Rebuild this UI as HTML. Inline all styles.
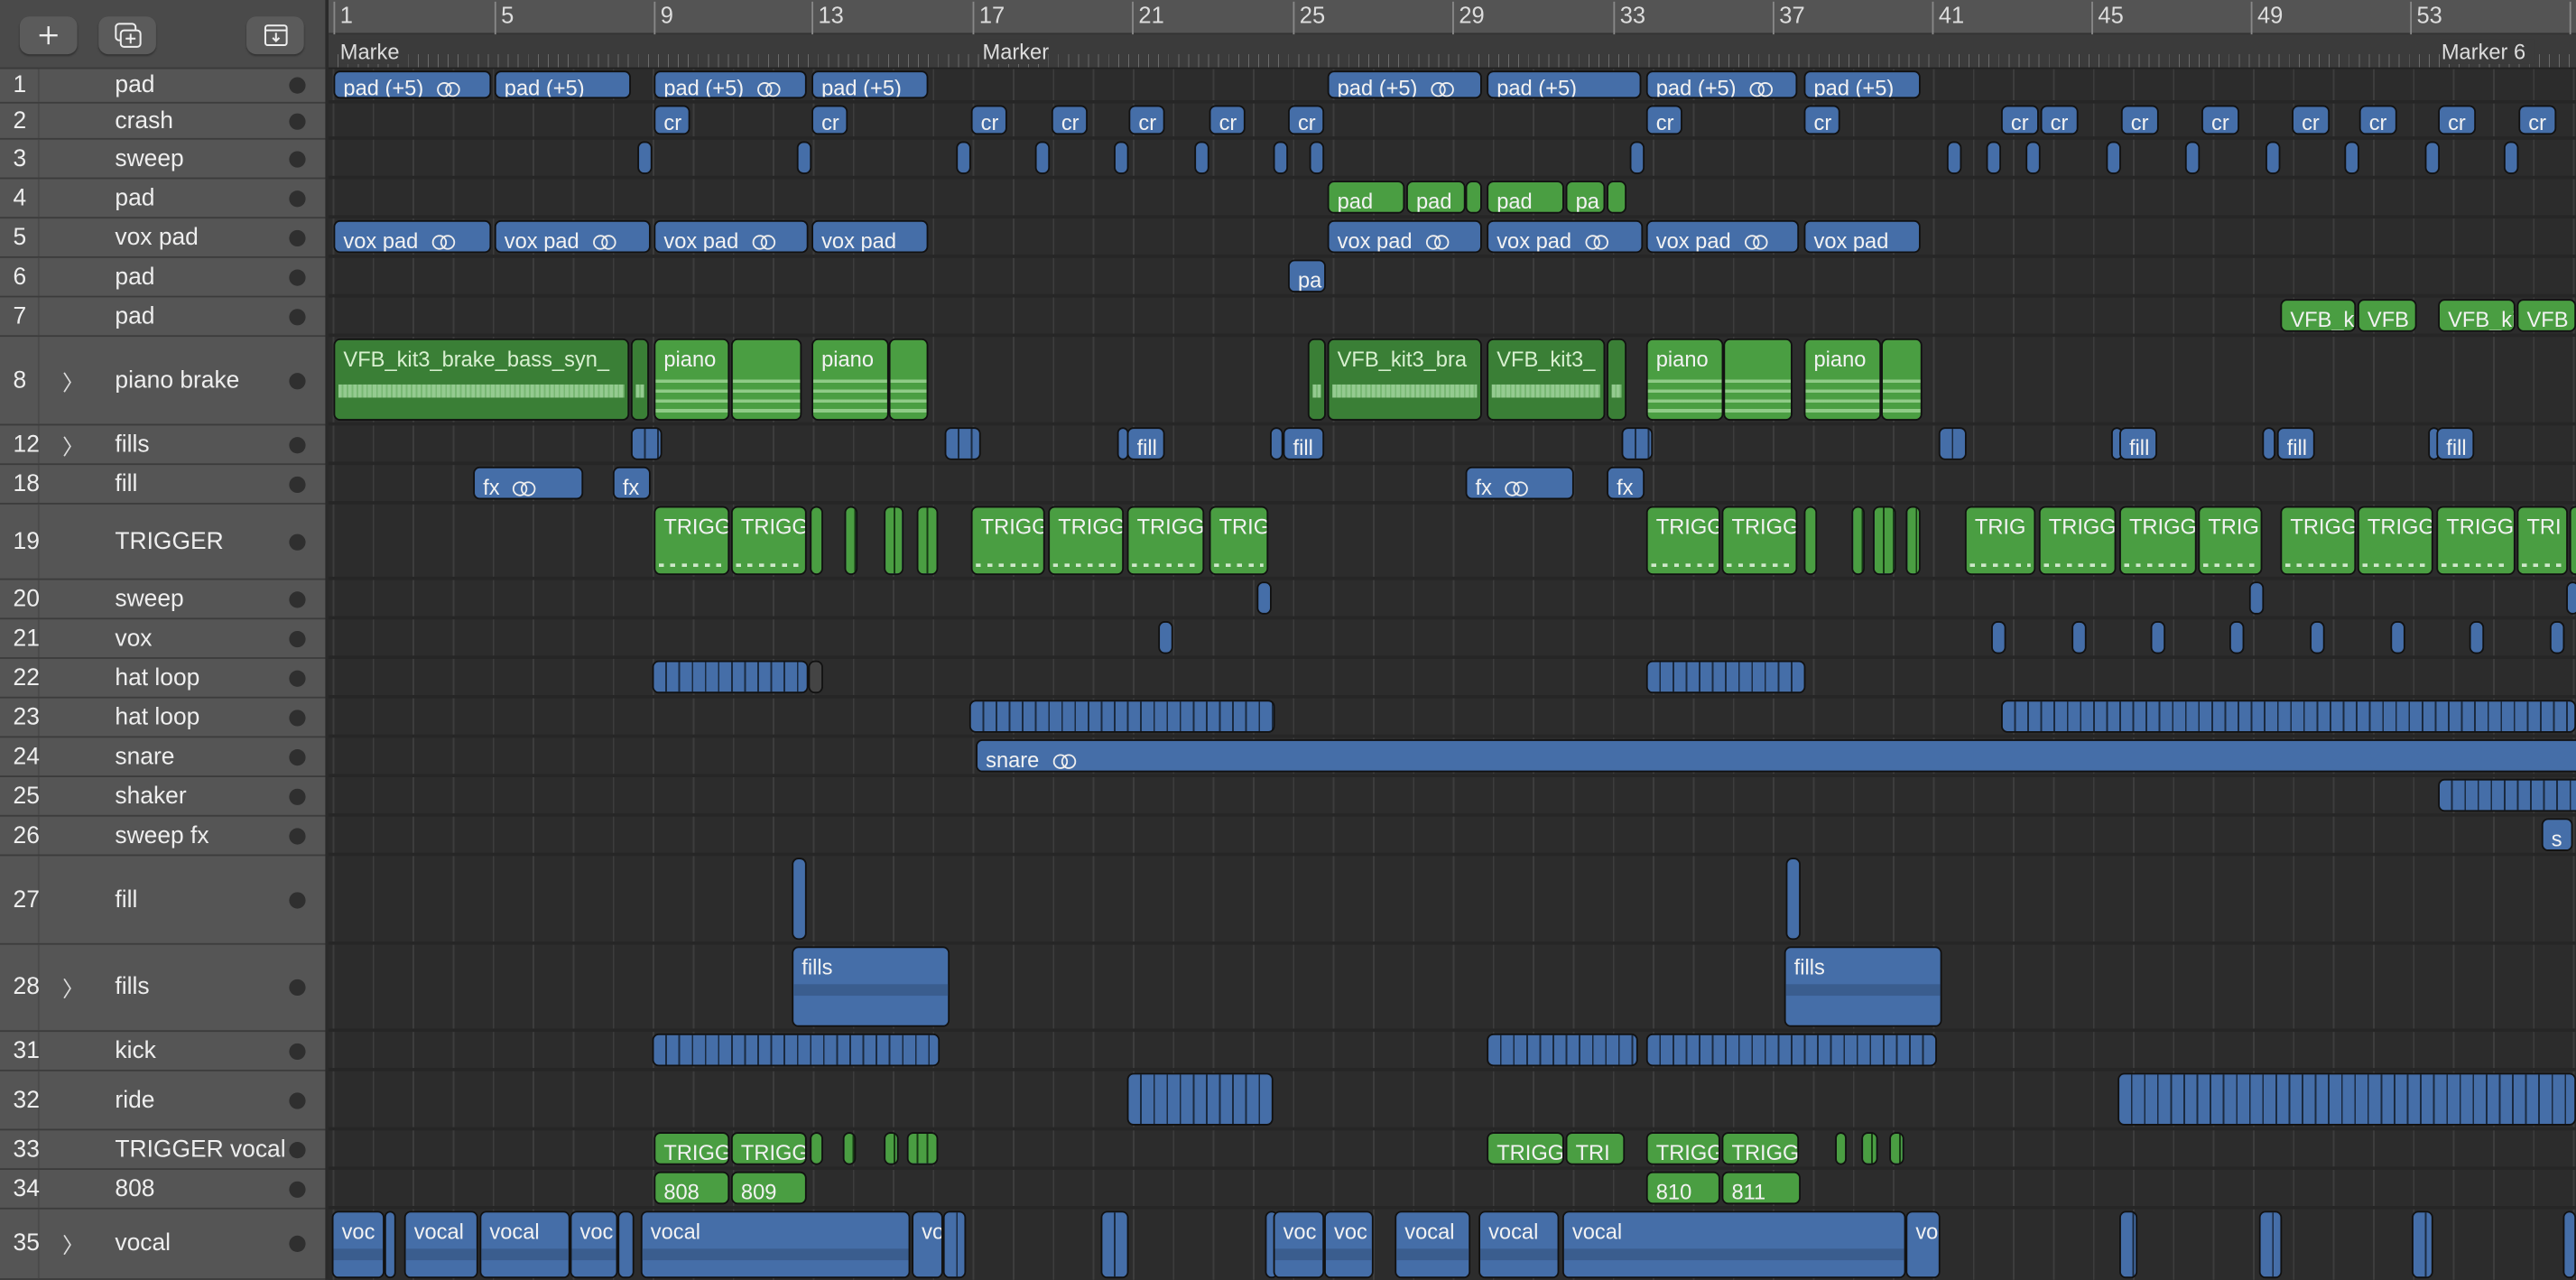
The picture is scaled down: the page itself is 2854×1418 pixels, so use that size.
<!DOCTYPE html>
<html><head><meta charset="utf-8"><style>
*{margin:0;padding:0;box-sizing:border-box}
html,body{width:2854px;height:1418px;overflow:hidden;background:#2b2b2b}
#w{position:absolute;left:0;top:0;width:1568px;height:779px;transform:scale(1.8202);transform-origin:0 0;font-family:"Liberation Sans",sans-serif;color:#eee;background:#2c2c2c;overflow:hidden}
#hdr{position:absolute;left:0;top:0;width:200px;height:779px;background:#555}
#tb{position:absolute;left:0;top:0;width:200px;height:42px;background:#4a4a4a;border-bottom:1px solid #3a3a3a}
.btn{position:absolute;top:10px;width:35px;height:23px;border-radius:6px;background:#5b5b5b;box-shadow:0 1px 1px #333}
.th{position:absolute;left:0;width:199px;border-bottom:1px solid #3c3c3c;font-size:14.5px}
.th .n{position:absolute;left:8px;top:50%;transform:translateY(-50%)}
.th .c{position:absolute;left:38px;top:50%;transform:translateY(-50%);font-size:13px;color:#ddd}
.th .nm{position:absolute;left:70px;top:50%;transform:translateY(-50%);white-space:nowrap}
.th .d{position:absolute;left:176px;top:50%;margin-top:-5px;width:10px;height:10px;border-radius:50%;background:#2f2f2f}
.th .sep{position:absolute;left:23px;top:0;bottom:0;width:1px;background:#4a4a4a}
#ru{position:absolute;left:200px;top:0;width:1368px;height:21px;background:#545454;border-bottom:1px solid #333}
#mk{position:absolute;left:200px;top:21px;width:1368px;height:21px;background:#3b3b3b;border-bottom:1px solid #222;
background-image:repeating-linear-gradient(90deg,transparent 0,transparent 5.59px,#6a6a6a 5.59px,#6a6a6a 6.09px);background-size:100% 8px;background-repeat:no-repeat;background-position:0 12px}
.bn{position:absolute;top:1px;font-size:14px;color:#ddd;padding-left:3px;border-left:1px solid #888;height:20px}
#ar{position:absolute;left:200px;top:42px;width:1368px;height:737px;background-color:#2c2c2c;
background-image:repeating-linear-gradient(90deg,transparent 0,transparent 2.5px,#3d3d3d 2.5px,#3d3d3d 3.5px,transparent 3.5px,transparent 24.35px)}
.row{position:absolute;left:200px;width:1368px;border-bottom:2px solid #262626}
.r{position:absolute;top:1px;bottom:1px;border:1px solid #111;border-radius:4px;background:#456ea8;font-size:13px;line-height:15px;color:#f2f2f2;padding:2px 0 0 5px;overflow:hidden;white-space:nowrap}
.g{background:#4a9e42}
.ga{background:#3a7f36;color:#d8f0d0}
.s{background-image:repeating-linear-gradient(90deg,#456ea8 0,#456ea8 7px,#1a2a40 7px,#1a2a40 8px)}
.sg{background-image:repeating-linear-gradient(90deg,#4a9e42 0,#4a9e42 5px,#173a14 5px,#173a14 6px)}
.lp{display:inline-block;width:9px;height:9px;border:1.3px solid #eee;border-radius:50%;vertical-align:-1px;margin-left:8px}
.lp+.lp{margin-left:-4px}
.wav{position:absolute;left:2px;right:2px;top:27px;height:8px;background:repeating-linear-gradient(90deg,#9ed39a 0,#9ed39a 2px,#7fbf7a 2px,#7fbf7a 3px);opacity:.9}
.midi{position:absolute;left:0;right:0;top:20px;height:26px;background:repeating-linear-gradient(0deg,transparent 0,transparent 2px,#c8f0c0 2px,#c8f0c0 4px,transparent 4px,transparent 6px);opacity:.55}
.dots{position:absolute;left:2px;right:2px;bottom:4px;height:2px;background:repeating-linear-gradient(90deg,#cfe9cb 0,#cfe9cb 3px,transparent 3px,transparent 7px)}
.lane{position:absolute;left:0;right:0;top:22px;height:7px;background:#3a5d8e}
.t{padding-top:4px}
</style></head><body><div id="w">
<div id="ar"></div>
<div id="hdr">
<div id="tb">
<div class="btn" style="left:12px"><svg width="35" height="23"><path d="M17.5 6v11M12 11.5h11" stroke="#eee" stroke-width="1.3"/></svg></div>
<div class="btn" style="left:60px"><svg width="35" height="23"><rect x="10.5" y="4.5" width="12" height="10" rx="2" fill="none" stroke="#eee" stroke-width="1.1"/><rect x="13.5" y="8.5" width="12" height="10" rx="2" fill="#5b5b5b" stroke="#eee" stroke-width="1.1"/><path d="M19.5 10.5v6M16.5 13.5h6" stroke="#eee" stroke-width="1.1"/></svg></div>
<div class="btn" style="left:150px"><svg width="35" height="23"><rect x="11.5" y="5.5" width="13" height="12" rx="1.5" fill="none" stroke="#eee" stroke-width="1.1"/><path d="M11.5 8.5h13M18 10v5M16 13l2 2 2-2" stroke="#eee" stroke-width="1.1" fill="none"/></svg></div>
</div>
<div class="th" style="top:42px;height:21px"><span class="sep"></span><span class="n">1</span><span class="nm">pad</span><span class="d"></span></div>
<div class="th" style="top:63px;height:22px"><span class="sep"></span><span class="n">2</span><span class="nm">crash</span><span class="d"></span></div>
<div class="th" style="top:85px;height:24px"><span class="sep"></span><span class="n">3</span><span class="nm">sweep</span><span class="d"></span></div>
<div class="th" style="top:109px;height:24px"><span class="sep"></span><span class="n">4</span><span class="nm">pad</span><span class="d"></span></div>
<div class="th" style="top:133px;height:24px"><span class="sep"></span><span class="n">5</span><span class="nm">vox pad</span><span class="d"></span></div>
<div class="th" style="top:157px;height:24px"><span class="sep"></span><span class="n">6</span><span class="nm">pad</span><span class="d"></span></div>
<div class="th" style="top:181px;height:24px"><span class="sep"></span><span class="n">7</span><span class="nm">pad</span><span class="d"></span></div>
<div class="th" style="top:205px;height:54px"><span class="sep"></span><span class="n">8</span><span class="c">〉</span><span class="nm">piano brake</span><span class="d"></span></div>
<div class="th" style="top:259px;height:24px"><span class="sep"></span><span class="n">12</span><span class="c">〉</span><span class="nm">fills</span><span class="d"></span></div>
<div class="th" style="top:283px;height:24px"><span class="sep"></span><span class="n">18</span><span class="nm">fill</span><span class="d"></span></div>
<div class="th" style="top:307px;height:46px"><span class="sep"></span><span class="n">19</span><span class="nm">TRIGGER</span><span class="d"></span></div>
<div class="th" style="top:353px;height:24px"><span class="sep"></span><span class="n">20</span><span class="nm">sweep</span><span class="d"></span></div>
<div class="th" style="top:377px;height:24px"><span class="sep"></span><span class="n">21</span><span class="nm">vox</span><span class="d"></span></div>
<div class="th" style="top:401px;height:24px"><span class="sep"></span><span class="n">22</span><span class="nm">hat loop</span><span class="d"></span></div>
<div class="th" style="top:425px;height:24px"><span class="sep"></span><span class="n">23</span><span class="nm">hat loop</span><span class="d"></span></div>
<div class="th" style="top:449px;height:24px"><span class="sep"></span><span class="n">24</span><span class="nm">snare</span><span class="d"></span></div>
<div class="th" style="top:473px;height:24px"><span class="sep"></span><span class="n">25</span><span class="nm">shaker</span><span class="d"></span></div>
<div class="th" style="top:497px;height:24px"><span class="sep"></span><span class="n">26</span><span class="nm">sweep fx</span><span class="d"></span></div>
<div class="th" style="top:521px;height:54px"><span class="sep"></span><span class="n">27</span><span class="nm">fill</span><span class="d"></span></div>
<div class="th" style="top:575px;height:53px"><span class="sep"></span><span class="n">28</span><span class="c">〉</span><span class="nm">fills</span><span class="d"></span></div>
<div class="th" style="top:628px;height:24px"><span class="sep"></span><span class="n">31</span><span class="nm">kick</span><span class="d"></span></div>
<div class="th" style="top:652px;height:36px"><span class="sep"></span><span class="n">32</span><span class="nm">ride</span><span class="d"></span></div>
<div class="th" style="top:688px;height:24px"><span class="sep"></span><span class="n">33</span><span class="nm">TRIGGER vocal</span><span class="d"></span></div>
<div class="th" style="top:712px;height:24px"><span class="sep"></span><span class="n">34</span><span class="nm">808</span><span class="d"></span></div>
<div class="th" style="top:736px;height:43px"><span class="sep"></span><span class="n">35</span><span class="c">〉</span><span class="nm">vocal</span><span class="d"></span></div>
<div style="position:absolute;left:198px;top:0;width:2px;height:779px;background:#2a2a2a"></div>
</div>
<div id="ru">
<span class="bn" style="left:3px">1</span><span class="bn" style="left:101px">5</span><span class="bn" style="left:198px">9</span><span class="bn" style="left:294px">13</span><span class="bn" style="left:392px">17</span><span class="bn" style="left:489px">21</span><span class="bn" style="left:587px">25</span><span class="bn" style="left:684px">29</span><span class="bn" style="left:782px">33</span><span class="bn" style="left:879px">37</span><span class="bn" style="left:976px">41</span><span class="bn" style="left:1073px">45</span><span class="bn" style="left:1170px">49</span><span class="bn" style="left:1267px">53</span><span class="bn" style="left:1364px">5</span>
</div>
<div id="mk">
<span style="position:absolute;left:7px;top:3px;font-size:13px;color:#ddd;background:#3b3b3b">Marke</span>
<span style="position:absolute;left:398px;top:3px;font-size:13px;color:#ddd;background:#3b3b3b">Marker</span>
<span style="position:absolute;left:1286px;top:3px;font-size:13px;color:#ddd;background:#3b3b3b;padding-right:6px">Marker 6</span>
</div>

<div class="row" style="top:42px;height:21px">
<div class="r" style="left:3px;width:96px">pad (+5)<span class="lp"></span><span class="lp"></span></div>
<div class="r" style="left:101px;width:83px">pad (+5)</div>
<div class="r" style="left:198px;width:93px">pad (+5)<span class="lp"></span><span class="lp"></span></div>
<div class="r" style="left:294px;width:71px">pad (+5)</div>
<div class="r" style="left:608px;width:94px">pad (+5)<span class="lp"></span><span class="lp"></span></div>
<div class="r" style="left:705px;width:94px">pad (+5)</div>
<div class="r" style="left:802px;width:92px">pad (+5)<span class="lp"></span><span class="lp"></span></div>
<div class="r" style="left:898px;width:71px">pad (+5)</div>
</div>
<div class="row" style="top:63px;height:22px">
<div class="r" style="left:198px;width:22px">cr</div><div class="r" style="left:294px;width:22px">cr</div><div class="r" style="left:391px;width:22px">cr</div><div class="r" style="left:440px;width:22px">cr</div><div class="r" style="left:487px;width:22px">cr</div><div class="r" style="left:536px;width:22px">cr</div><div class="r" style="left:584px;width:22px">cr</div><div class="r" style="left:802px;width:22px">cr</div><div class="r" style="left:898px;width:22px">cr</div><div class="r" style="left:1018px;width:23px">cr</div><div class="r" style="left:1042px;width:23px">cr</div><div class="r" style="left:1091px;width:23px">cr</div><div class="r" style="left:1140px;width:23px">cr</div><div class="r" style="left:1195px;width:23px">cr</div><div class="r" style="left:1236px;width:23px">cr</div><div class="r" style="left:1284px;width:23px">cr</div><div class="r" style="left:1333px;width:23px">cr</div>
</div>
<div class="row" style="top:85px;height:24px">
<div class="r" style="left:188px;width:9px"></div><div class="r" style="left:285px;width:9px"></div><div class="r" style="left:382px;width:9px"></div><div class="r" style="left:430px;width:9px"></div><div class="r" style="left:478px;width:9px"></div><div class="r" style="left:527px;width:9px"></div><div class="r" style="left:575px;width:9px"></div><div class="r" style="left:597px;width:9px"></div><div class="r" style="left:792px;width:9px"></div><div class="r" style="left:985px;width:9px"></div><div class="r" style="left:1009px;width:9px"></div><div class="r" style="left:1033px;width:9px"></div><div class="r" style="left:1082px;width:9px"></div><div class="r" style="left:1130px;width:9px"></div><div class="r" style="left:1179px;width:9px"></div><div class="r" style="left:1227px;width:9px"></div><div class="r" style="left:1276px;width:9px"></div><div class="r" style="left:1324px;width:9px"></div>
</div>
<div class="row" style="top:109px;height:24px">
<div class="r g t" style="left:608px;width:47px">pad</div><div class="r g t" style="left:656px;width:36px">pad</div><div class="r g" style="left:692px;width:10px"></div><div class="r g t" style="left:705px;width:47px">pad</div><div class="r g t" style="left:753px;width:24px">pa</div><div class="r g" style="left:778px;width:12px"></div>
</div>
<div class="row" style="top:133px;height:24px">
<div class="r t" style="left:3px;width:96px">vox pad<span class="lp"></span><span class="lp"></span></div>
<div class="r t" style="left:101px;width:95px">vox pad<span class="lp"></span><span class="lp"></span></div>
<div class="r t" style="left:198px;width:94px">vox pad<span class="lp"></span><span class="lp"></span></div>
<div class="r t" style="left:294px;width:71px">vox pad</div>
<div class="r t" style="left:608px;width:94px">vox pad<span class="lp"></span><span class="lp"></span></div>
<div class="r t" style="left:705px;width:95px">vox pad<span class="lp"></span><span class="lp"></span></div>
<div class="r t" style="left:802px;width:93px">vox pad<span class="lp"></span><span class="lp"></span></div>
<div class="r t" style="left:898px;width:71px">vox pad</div>
</div>
<div class="row" style="top:157px;height:24px"><div class="r t" style="left:584px;width:23px">pa</div></div>
<div class="row" style="top:181px;height:24px">
<div class="r g t" style="left:1188px;width:46px">VFB_ki</div><div class="r g t" style="left:1235px;width:36px">VFB</div><div class="r g t" style="left:1284px;width:47px">VFB_ki</div><div class="r g t" style="left:1332px;width:36px">VFB</div>
</div>
<div class="row" style="top:205px;height:54px">
<div class="r ga t" style="left:3px;width:180px">VFB_kit3_brake_bass_syn_<div class="wav"></div></div>
<div class="r ga" style="left:184px;width:11px"><div class="wav"></div></div>
<div class="r g t" style="left:198px;width:46px">piano<div class="midi"></div></div>
<div class="r g" style="left:245px;width:43px"><div class="midi"></div></div>
<div class="r g t" style="left:294px;width:47px">piano<div class="midi"></div></div>
<div class="r g" style="left:341px;width:24px"><div class="midi"></div></div>
<div class="r ga" style="left:596px;width:11px"><div class="wav"></div></div>
<div class="r ga t" style="left:608px;width:94px">VFB_kit3_bra<div class="wav"></div></div>
<div class="r ga t" style="left:705px;width:72px">VFB_kit3_<div class="wav"></div></div>
<div class="r ga" style="left:778px;width:12px"><div class="wav"></div></div>
<div class="r g t" style="left:802px;width:47px">piano<div class="midi"></div></div>
<div class="r g" style="left:849px;width:42px"><div class="midi"></div></div>
<div class="r g t" style="left:898px;width:47px">piano<div class="midi"></div></div>
<div class="r g" style="left:945px;width:25px"><div class="midi"></div></div>
</div>
<div class="row" style="top:259px;height:24px">
<div class="r s" style="left:184px;width:19px"></div><div class="r s" style="left:375px;width:22px"></div><div class="r s" style="left:480px;width:7px"></div><div class="r t" style="left:486px;width:23px">fill</div><div class="r s" style="left:573px;width:8px"></div><div class="r t" style="left:581px;width:25px">fill</div><div class="r s" style="left:787px;width:19px"></div><div class="r s" style="left:980px;width:17px"></div><div class="r s" style="left:1085px;width:6px"></div><div class="r t" style="left:1090px;width:23px">fill</div><div class="r s" style="left:1177px;width:8px"></div><div class="r t" style="left:1186px;width:23px">fill</div><div class="r s" style="left:1278px;width:6px"></div><div class="r t" style="left:1283px;width:23px">fill</div>
</div>
<div class="row" style="top:283px;height:24px">
<div class="r t" style="left:88px;width:67px">fx<span class="lp"></span><span class="lp"></span></div><div class="r t" style="left:173px;width:23px">fx</div><div class="r t" style="left:692px;width:66px">fx<span class="lp"></span><span class="lp"></span></div><div class="r t" style="left:778px;width:23px">fx</div>
</div>
<div class="row" style="top:307px;height:46px">
<div class="r g t" style="left:198px;width:46px">TRIGG<div class="dots"></div></div><div class="r g t" style="left:245px;width:46px">TRIGG<div class="dots"></div></div>
<div class="r g" style="left:293px;width:8px"></div><div class="r sg" style="left:314px;width:8px"></div><div class="r sg" style="left:338px;width:12px"></div><div class="r sg" style="left:358px;width:13px"></div>
<div class="r g t" style="left:391px;width:45px">TRIGG<div class="dots"></div></div><div class="r g t" style="left:438px;width:46px">TRIGG<div class="dots"></div></div><div class="r g t" style="left:486px;width:47px">TRIGG<div class="dots"></div></div><div class="r g t" style="left:536px;width:36px">TRIG<div class="dots"></div></div>
<div class="r g t" style="left:802px;width:45px">TRIGG<div class="dots"></div></div><div class="r g t" style="left:848px;width:46px">TRIGG<div class="dots"></div></div>
<div class="r g" style="left:898px;width:8px"></div><div class="r sg" style="left:927px;width:8px"></div><div class="r sg" style="left:940px;width:14px"></div><div class="r sg" style="left:960px;width:9px"></div>
<div class="r g t" style="left:996px;width:43px">TRIG<div class="dots"></div></div><div class="r g t" style="left:1041px;width:47px">TRIGG<div class="dots"></div></div><div class="r g t" style="left:1090px;width:47px">TRIGG<div class="dots"></div></div><div class="r g t" style="left:1138px;width:39px">TRIG<div class="dots"></div></div><div class="r g t" style="left:1188px;width:46px">TRIGG<div class="dots"></div></div><div class="r g t" style="left:1235px;width:46px">TRIGG<div class="dots"></div></div><div class="r g t" style="left:1283px;width:48px">TRIGG<div class="dots"></div></div><div class="r g t" style="left:1332px;width:31px">TRI<div class="dots"></div></div><div class="r g" style="left:1364px;width:6px"></div>
</div>
<div class="row" style="top:353px;height:24px"><div class="r" style="left:565px;width:9px"></div><div class="r" style="left:1169px;width:9px"></div><div class="r" style="left:1362px;width:8px"></div></div>
<div class="row" style="top:377px;height:24px">
<div class="r" style="left:505px;width:9px"></div><div class="r" style="left:1012px;width:9px"></div><div class="r" style="left:1061px;width:9px"></div><div class="r" style="left:1109px;width:9px"></div><div class="r" style="left:1157px;width:9px"></div><div class="r" style="left:1206px;width:9px"></div><div class="r" style="left:1255px;width:9px"></div><div class="r" style="left:1303px;width:9px"></div><div class="r" style="left:1352px;width:9px"></div>
</div>
<div class="row" style="top:401px;height:24px"><div class="r s" style="left:197px;width:95px"></div><div class="r" style="left:292px;width:9px;background:#444"></div><div class="r s" style="left:802px;width:97px"></div></div>
<div class="row" style="top:425px;height:24px"><div class="r s" style="left:390px;width:186px"></div><div class="r s" style="left:1018px;width:350px"></div></div>
<div class="row" style="top:449px;height:24px"><div class="r t" style="left:394px;width:980px">snare<span class="lp"></span><span class="lp"></span></div></div>
<div class="row" style="top:473px;height:24px"><div class="r s" style="left:1284px;width:90px"></div></div>
<div class="row" style="top:497px;height:24px"><div class="r t" style="left:1347px;width:19px">s</div></div>
<div class="row" style="top:521px;height:54px"><div class="r" style="left:282px;width:9px"></div><div class="r" style="left:887px;width:9px"></div></div>
<div class="row" style="top:575px;height:53px">
<div class="r t" style="left:282px;width:96px">fills<div class="lane"></div></div><div class="r t" style="left:886px;width:96px">fills<div class="lane"></div></div>
</div>
<div class="row" style="top:628px;height:24px"><div class="r s" style="left:197px;width:175px"></div><div class="r s" style="left:705px;width:92px"></div><div class="r s" style="left:802px;width:177px"></div></div>
<div class="row" style="top:652px;height:36px"><div class="r s" style="left:486px;width:89px"></div><div class="r s" style="left:1089px;width:279px"></div></div>
<div class="row" style="top:688px;height:24px">
<div class="r g t" style="left:198px;width:46px">TRIGG</div><div class="r g t" style="left:245px;width:46px">TRIGG</div><div class="r g" style="left:293px;width:8px"></div><div class="r sg" style="left:313px;width:8px"></div><div class="r sg" style="left:338px;width:9px"></div><div class="r sg" style="left:352px;width:19px"></div>
<div class="r g t" style="left:705px;width:47px">TRIGG</div><div class="r g t" style="left:753px;width:36px">TRI</div><div class="r g t" style="left:802px;width:45px">TRIGG</div><div class="r g t" style="left:848px;width:47px">TRIGG</div><div class="r g" style="left:917px;width:7px"></div><div class="r sg" style="left:933px;width:10px"></div><div class="r sg" style="left:950px;width:9px"></div>
</div>
<div class="row" style="top:712px;height:24px">
<div class="r g t" style="left:198px;width:46px">808</div><div class="r g t" style="left:245px;width:46px">809</div><div class="r g t" style="left:802px;width:45px">810</div><div class="r g t" style="left:848px;width:48px">811</div>
</div>
<div class="row" style="top:736px;height:45px">
<div class="r t" style="left:2px;width:32px">voc<div class="lane"></div></div><div class="r" style="left:34px;width:7px"></div><div class="r t" style="left:46px;width:45px">vocal<div class="lane"></div></div><div class="r t" style="left:92px;width:55px">vocal<div class="lane"></div></div><div class="r t" style="left:147px;width:29px">voc<div class="lane"></div></div><div class="r" style="left:176px;width:10px"></div><div class="r t" style="left:190px;width:164px">vocal<div class="lane"></div></div><div class="r t" style="left:355px;width:19px">vo</div><div class="r s" style="left:374px;width:14px"></div>
<div class="r s" style="left:470px;width:17px"></div><div class="r s" style="left:570px;width:8px"></div><div class="r t" style="left:575px;width:31px">voc<div class="lane"></div></div><div class="r t" style="left:606px;width:30px">voc<div class="lane"></div></div><div class="r t" style="left:649px;width:46px">vocal<div class="lane"></div></div><div class="r t" style="left:700px;width:49px">vocal<div class="lane"></div></div><div class="r t" style="left:751px;width:209px">vocal<div class="lane"></div></div><div class="r t" style="left:960px;width:21px">vo</div>
<div class="r s" style="left:1090px;width:11px"></div><div class="r s" style="left:1175px;width:14px"></div><div class="r s" style="left:1268px;width:13px"></div><div class="r s" style="left:1360px;width:8px"></div>
</div>
</div></body></html>
